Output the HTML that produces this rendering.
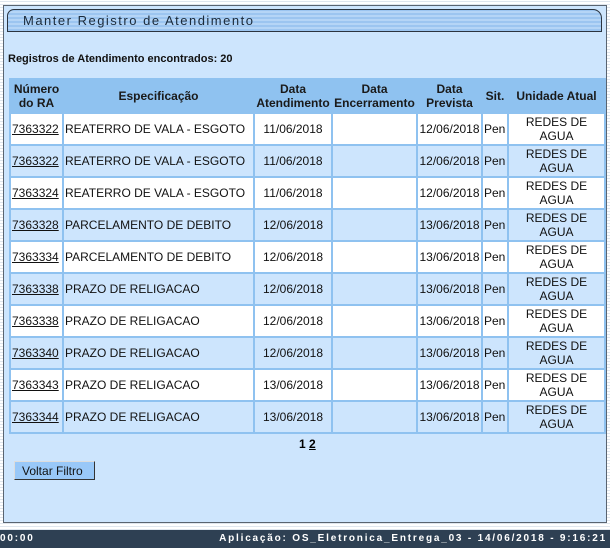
<!DOCTYPE html>
<html><head><meta charset="utf-8"><style>
*{margin:0;padding:0;box-sizing:border-box}
body{width:610px;height:548px;overflow:hidden;background:#fff;font-family:"Liberation Sans",Arial,sans-serif;position:relative}
.stripes{position:absolute;left:0;top:0;width:610px;height:530px;background:repeating-linear-gradient(0deg,#dfe6ee 0 1px,#fff 1px 3px)}
.panel{position:absolute;left:3px;top:5px;width:604px;height:518px;background:#cde5fd;border:1px solid #5a6470}
.title{position:absolute;left:7px;top:9px;width:595px;height:23px;border:1px solid #2b3440;border-radius:7px 9px 0 0;background:repeating-linear-gradient(0deg,#9cc5f0 0 2px,#b5d5f6 2px 4px);font-size:13px;letter-spacing:1.5px;color:#1a2a3a;padding:3px 0 0 15px}
.count{position:absolute;left:8px;top:53px;font-size:11px;font-weight:bold;color:#111}
table{position:absolute;left:9px;top:78px;width:597px;border-collapse:separate;border-spacing:2px;background:#8fc2f0}
th{background:#8fc2f0;font-size:12px;font-weight:bold;color:#1a1a1a;height:32px;line-height:14px}
td{height:30px;font-size:12px;color:#111;line-height:14px;padding:0 0 0 1px}
tr.w td{background:#fff}
tr.b td{background:#cde5fd}
td.c{text-align:center;padding:0}
td a{color:#111;text-decoration:underline}
.pg{position:absolute;left:299px;top:437px;font-size:12px;font-weight:bold}
.btn{position:absolute;left:14px;top:461px;width:81px;height:19px;background:#99c8f8;border:1px solid #333;border-top-color:#ddd;border-left-color:#ddd;font-size:12px;padding:2px 0 0 7px;color:#111}
.foot{position:absolute;left:0;top:530px;width:610px;height:18px;background:#2e4053;color:#fff;font-size:10px;font-weight:bold;letter-spacing:1.8px;line-height:18px}
</style></head><body>
<div class="stripes"></div>
<div class="panel"></div>
<div class="title">Manter Registro de Atendimento</div>
<div class="count">Registros de Atendimento encontrados: 20</div>
<table>
<tr><th style="width:51px">Número<br>do RA</th><th style="width:189px">Especificação</th><th style="width:76px">Data<br>Atendimento</th><th style="width:83px">Data<br>Encerramento</th><th style="width:63px">Data<br>Prevista</th><th style="width:24px">Sit.</th><th>Unidade Atual</th></tr>
<tr class="w"><td><a>7363322</a></td><td>REATERRO DE VALA - ESGOTO</td><td class="c">11/06/2018</td><td></td><td class="c">12/06/2018</td><td>Pen</td><td class="c">REDES DE<br>AGUA</td></tr>
<tr class="b"><td><a>7363322</a></td><td>REATERRO DE VALA - ESGOTO</td><td class="c">11/06/2018</td><td></td><td class="c">12/06/2018</td><td>Pen</td><td class="c">REDES DE<br>AGUA</td></tr>
<tr class="w"><td><a>7363324</a></td><td>REATERRO DE VALA - ESGOTO</td><td class="c">11/06/2018</td><td></td><td class="c">12/06/2018</td><td>Pen</td><td class="c">REDES DE<br>AGUA</td></tr>
<tr class="b"><td><a>7363328</a></td><td>PARCELAMENTO DE DEBITO</td><td class="c">12/06/2018</td><td></td><td class="c">13/06/2018</td><td>Pen</td><td class="c">REDES DE<br>AGUA</td></tr>
<tr class="w"><td><a>7363334</a></td><td>PARCELAMENTO DE DEBITO</td><td class="c">12/06/2018</td><td></td><td class="c">13/06/2018</td><td>Pen</td><td class="c">REDES DE<br>AGUA</td></tr>
<tr class="b"><td><a>7363338</a></td><td>PRAZO DE RELIGACAO</td><td class="c">12/06/2018</td><td></td><td class="c">13/06/2018</td><td>Pen</td><td class="c">REDES DE<br>AGUA</td></tr>
<tr class="w"><td><a>7363338</a></td><td>PRAZO DE RELIGACAO</td><td class="c">12/06/2018</td><td></td><td class="c">13/06/2018</td><td>Pen</td><td class="c">REDES DE<br>AGUA</td></tr>
<tr class="b"><td><a>7363340</a></td><td>PRAZO DE RELIGACAO</td><td class="c">12/06/2018</td><td></td><td class="c">13/06/2018</td><td>Pen</td><td class="c">REDES DE<br>AGUA</td></tr>
<tr class="w"><td><a>7363343</a></td><td>PRAZO DE RELIGACAO</td><td class="c">13/06/2018</td><td></td><td class="c">13/06/2018</td><td>Pen</td><td class="c">REDES DE<br>AGUA</td></tr>
<tr class="b"><td><a>7363344</a></td><td>PRAZO DE RELIGACAO</td><td class="c">13/06/2018</td><td></td><td class="c">13/06/2018</td><td>Pen</td><td class="c">REDES DE<br>AGUA</td></tr>
</table>
<div class="pg">1 <u>2</u></div>
<div class="btn">Voltar Filtro</div>
<div class="foot"><span style="position:absolute;left:0">00:00</span><span style="position:absolute;right:3px">Aplicação: OS_Eletronica_Entrega_03 - 14/06/2018 - 9:16:21</span></div>
</body></html>
